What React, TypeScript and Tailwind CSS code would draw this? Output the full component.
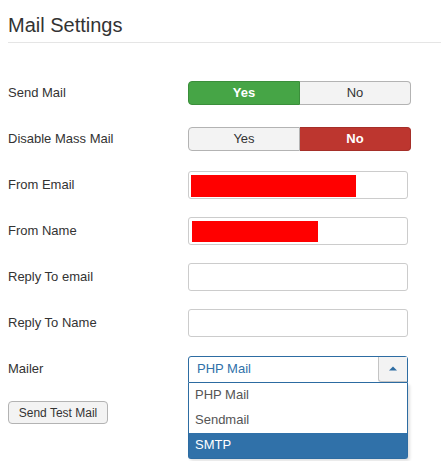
import React from 'react';

const rows = ['From Email', 'From Name', 'Reply To email', 'Reply To Name'];

const Toggle: React.FC<{ yes: boolean }> = ({ yes }) => (
    <div className="flex w-[223px] h-[24px] text-[13px]">
        <div
            className={`flex-1 flex items-center justify-center rounded-l-[4px] border ${yes ? 'bg-[#46a546] border-[#3b8e3b] text-white font-bold' : 'bg-[#f3f3f3] border-[#b3b3b3] text-[#333]'}`}
        >
            Yes
        </div>
        <div
            className={`flex-1 flex items-center justify-center rounded-r-[4px] border border-l-0 ${!yes ? 'bg-[#bd362f] border-[#a52f29] text-white font-bold' : 'bg-[#f3f3f3] border-[#b3b3b3] text-[#333]'}`}
        >
            No
        </div>
    </div>
);

const App: React.FC = () => {
    return (
        <div className="w-[442px] h-[461px] bg-white pl-2 pr-[1px] overflow-hidden font-[family-name:Liberation_Sans,Arial,sans-serif] text-[13px] text-[#333]">
            <h2 className="pt-[13px] pb-[5px] text-[20px] leading-[24px] font-normal text-[#333] border-b border-[#e5e5e5]">
                Mail Settings
            </h2>

            <div className="mt-[27px]">
                <div className="flex items-center h-[46px]">
                    <div className="w-[180px]">Send Mail</div>
                    <Toggle yes />
                </div>
                <div className="flex items-center h-[46px]">
                    <div className="w-[180px]">Disable Mass Mail</div>
                    <Toggle yes={false} />
                </div>

                {rows.map((label, i) => (
                    <div key={label} className="flex items-center h-[46px]">
                        <div className="w-[180px]">{label}</div>
                        <div className="w-[220px] h-[28px] border border-[#ccc] rounded-[3px] bg-white flex items-center">
                            {i === 0 && <div className="ml-[2px] mt-[1px] w-[165px] h-[22px] bg-[#ff0000]" />}
                            {i === 1 && <div className="ml-[3px] w-[126px] h-[21px] bg-[#ff0000]" />}
                        </div>
                    </div>
                ))}

                <div className="flex items-center h-[46px]">
                    <div className="w-[180px]">Mailer</div>
                    <div className="relative w-[220px]">
                        <div className="flex h-[27px] border border-[#2d6ca2] rounded-t-[3px] bg-white">
                            <div className="flex-1 flex items-center pl-[8px] text-[#3071a9]">PHP Mail</div>
                            <div className="w-[29px] flex items-center justify-center bg-[#f3f3f3] border-l border-b border-[#c4c4c4] rounded-bl-[3px]">
                                <svg width="8" height="5" viewBox="0 0 8 5">
                                    <path d="M0 4.5 L4 0.5 L8 4.5 Z" fill="#2d6ca2" />
                                </svg>
                            </div>
                        </div>
                        <div className="absolute left-0 top-full w-[220px] bg-white border border-t-0 border-[#2d6ca2] rounded-b-[3px] shadow-[2px_2px_3px_rgba(0,0,0,0.12)] z-10">
                            <div className="h-[25px] flex items-center pl-[6px] text-[#555]">PHP Mail</div>
                            <div className="h-[25px] flex items-center pl-[6px] text-[#555]">Sendmail</div>
                            <div className="h-[25px] flex items-center pl-[6px] bg-[#3071a9] text-white">SMTP</div>
                        </div>
                    </div>
                </div>

                <button className="mt-[9px] w-[100px] h-[23px] bg-[#f3f3f3] border border-[#b3b3b3] rounded-[4px] text-[12px] text-[#333] leading-none">
                    Send Test Mail
                </button>
            </div>
        </div>
    );
};

export default App;
